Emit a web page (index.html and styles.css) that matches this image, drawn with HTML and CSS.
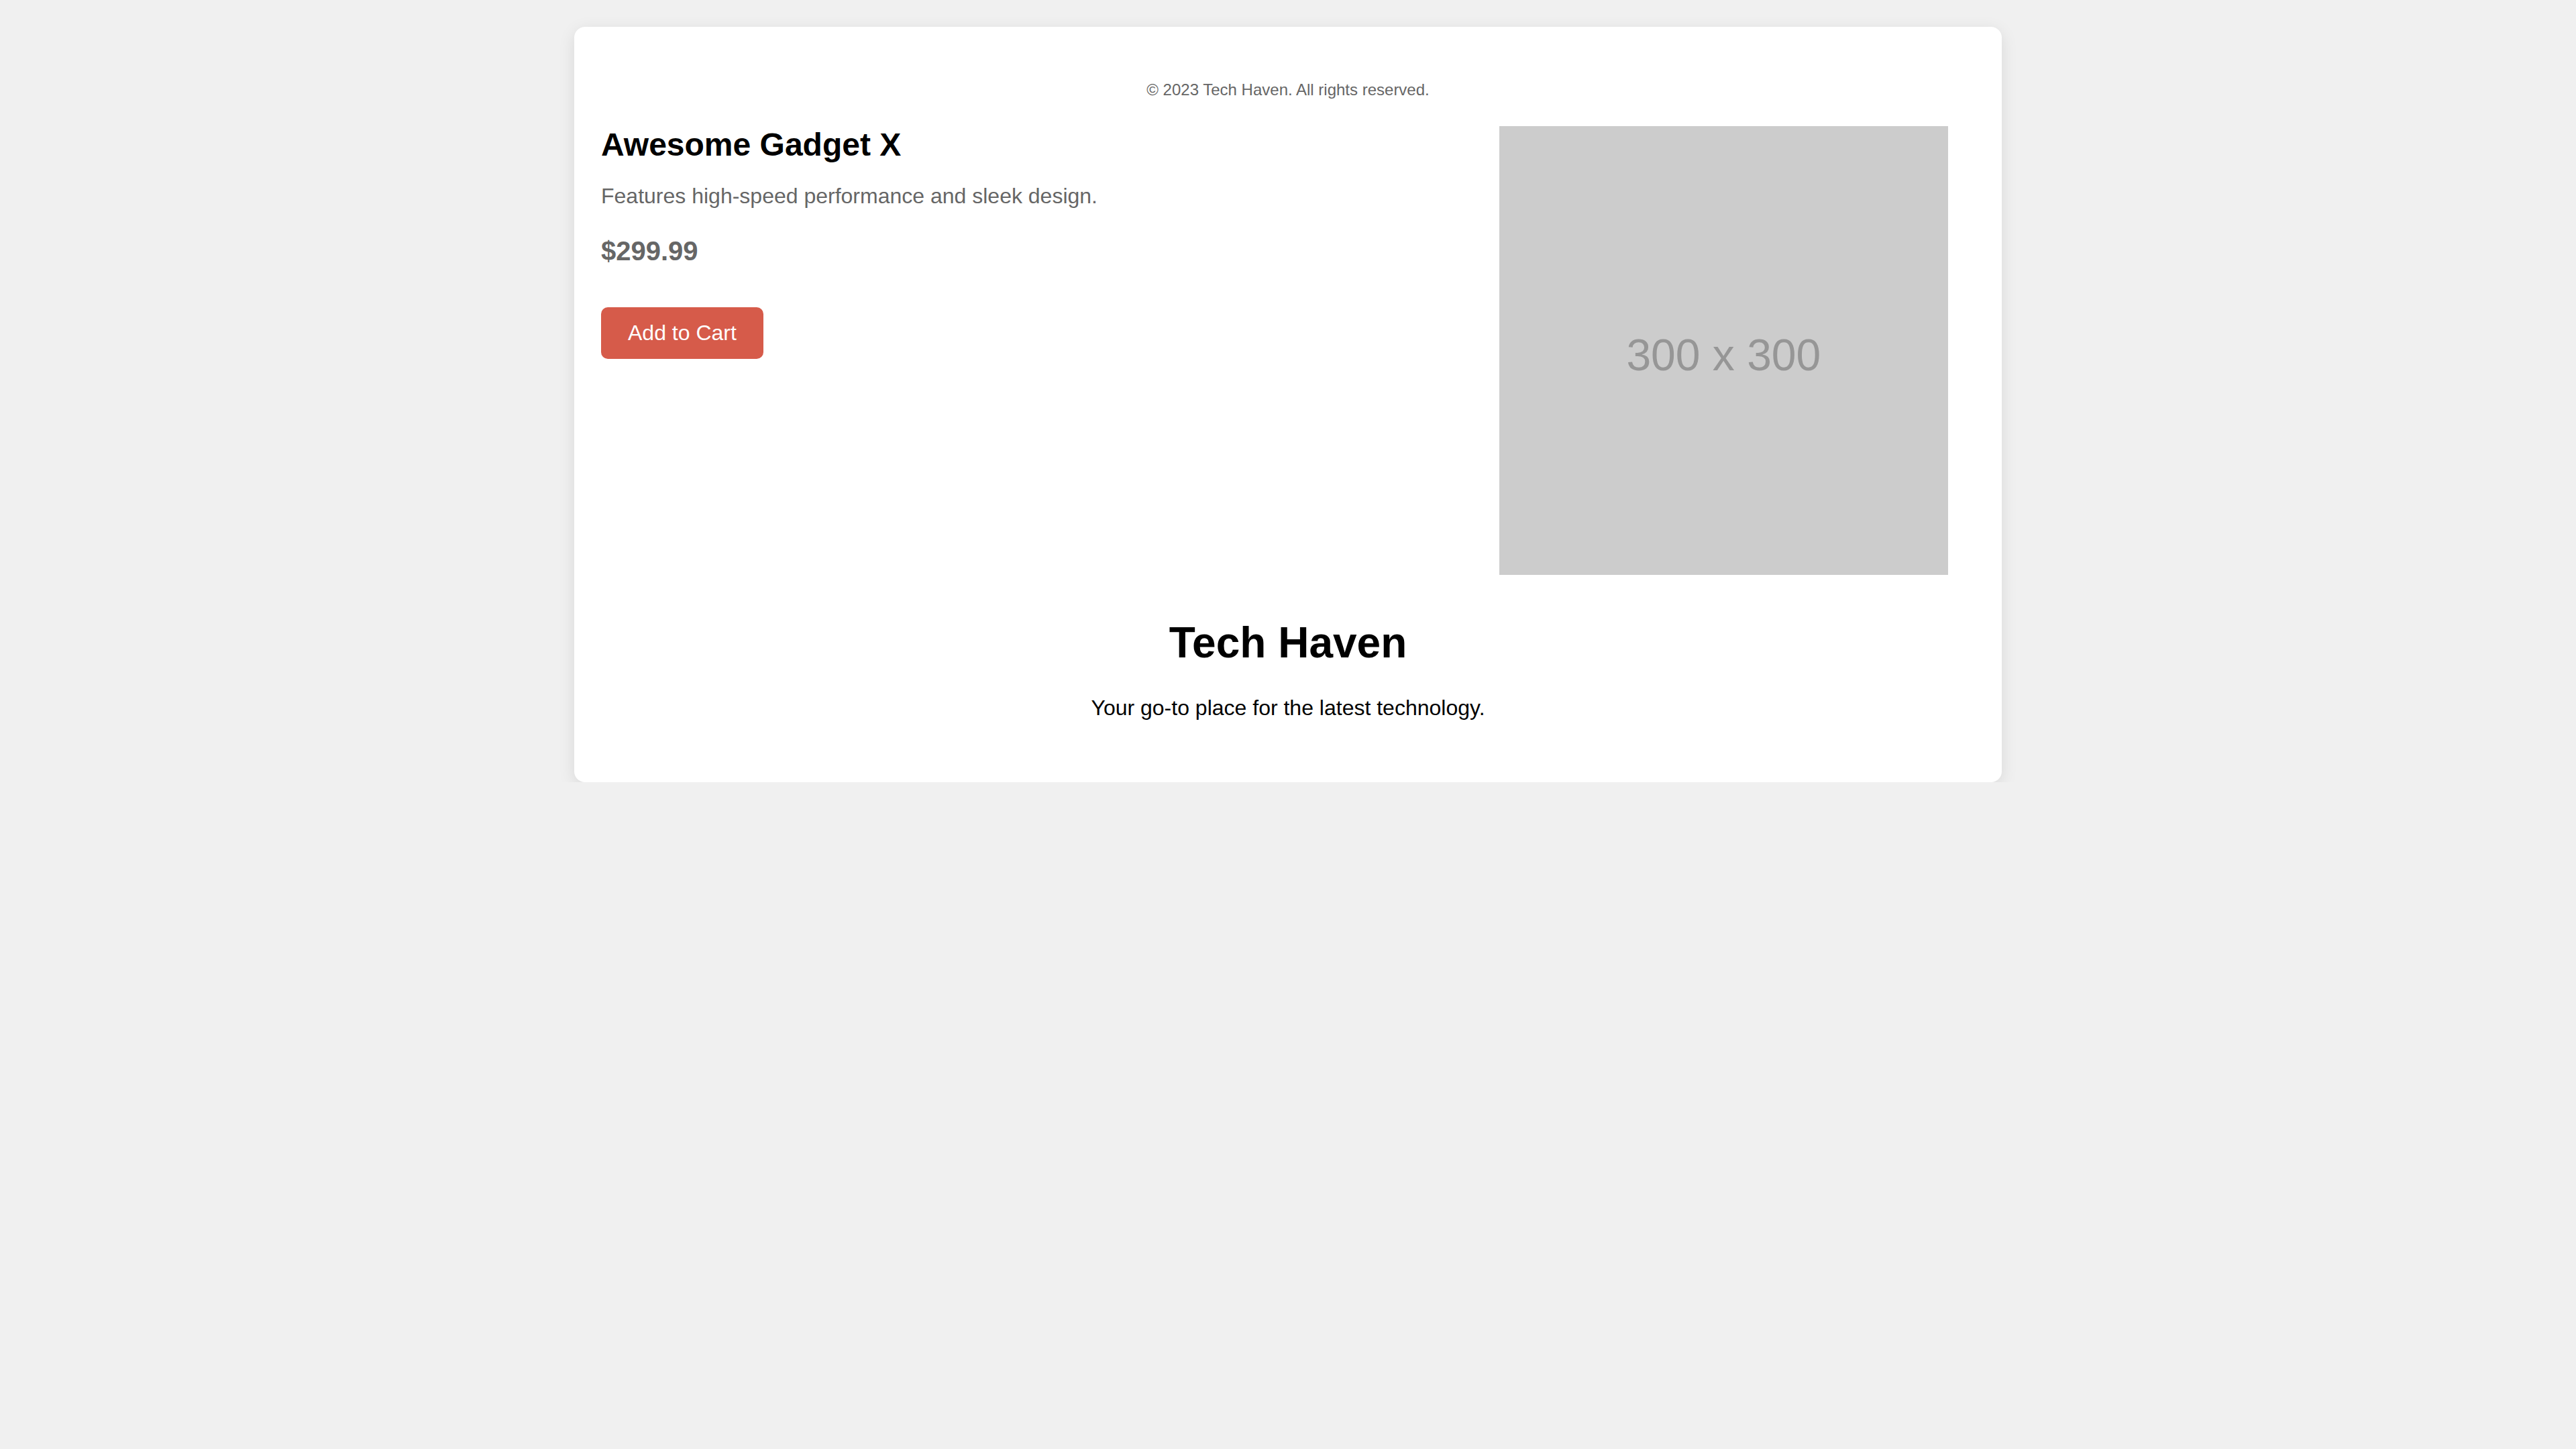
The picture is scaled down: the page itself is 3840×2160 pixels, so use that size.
FILE: index.html
```html
<!DOCTYPE html>
<html lang="en">
<head>
<meta charset="utf-8">
<title>Tech Haven</title>
<link rel="stylesheet" href="styles.css">
</head>
<body>
  <div class="card">
    <footer class="copyright">© 2023 Tech Haven. All rights reserved.</footer>
    <section class="product">
      <div class="info">
        <h2 class="product-title">Awesome Gadget X</h2>
        <p class="product-desc">Features high-speed performance and sleek design.</p>
        <p class="product-price">$299.99</p>
        <button class="add-btn">Add to Cart</button>
      </div>
      <div class="media">
        <div class="placeholder">300 x 300</div>
      </div>
    </section>
    <header class="site-header">
      <h1 class="site-title">Tech Haven</h1>
      <p class="site-tagline">Your go-to place for the latest technology.</p>
    </header>
  </div>
</body>
</html>
```

FILE: styles.css
```css
html, body {
  margin: 0;
  padding: 0;
}

body {
  background: #f0f0f0;
  font-family: "Liberation Sans", Arial, Helvetica, sans-serif;
  color: #000;
}

.card {
  width: 2048px;
  margin: 40px auto 0;
  padding: 40px;
  background: #fff;
  border-radius: 16px;
  box-shadow: 0 6px 24px rgba(0, 0, 0, 0.1);
  display: flex;
  flex-direction: column;
}

.copyright {
  margin: 40px 0;
  font-size: 24px;
  color: #666;
  text-align: center;
}

.product {
  display: flex;
  align-items: flex-start;
  margin-right: 40px;
}

.info {
  flex: 2;
  display: flex;
  flex-direction: column;
  align-items: flex-start;
}

.media {
  flex: 1;
}

.product-title {
  margin: 0;
  font-size: 48px;
  font-weight: bold;
  color: #000;
}

.product-desc {
  margin: 31px 0 0;
  font-size: 32px;
  color: #666;
}

.product-price {
  margin: 41px 0 0;
  font-size: 40px;
  font-weight: bold;
  color: #666;
}

.add-btn {
  margin-top: 61px;
  padding: 20px 40px;
  border: none;
  border-radius: 10px;
  background: #d65b4a;
  color: #fff;
  font-family: "Liberation Sans", Arial, Helvetica, sans-serif;
  font-size: 32px;
  line-height: normal;
  cursor: pointer;
}

.placeholder {
  width: 100%;
  aspect-ratio: 1 / 1;
  background: #cccccc;
  color: #969696;
  font-size: 66px;
  display: flex;
  align-items: center;
  justify-content: center;
  padding-top: 13px;
  box-sizing: border-box;
}

.site-header {
  margin-top: 64px;
  text-align: center;
}

.site-title {
  margin: 0;
  font-size: 64px;
  font-weight: bold;
}

.site-tagline {
  margin: 42px 0 52px;
  font-size: 32px;
  color: #000;
}
```
